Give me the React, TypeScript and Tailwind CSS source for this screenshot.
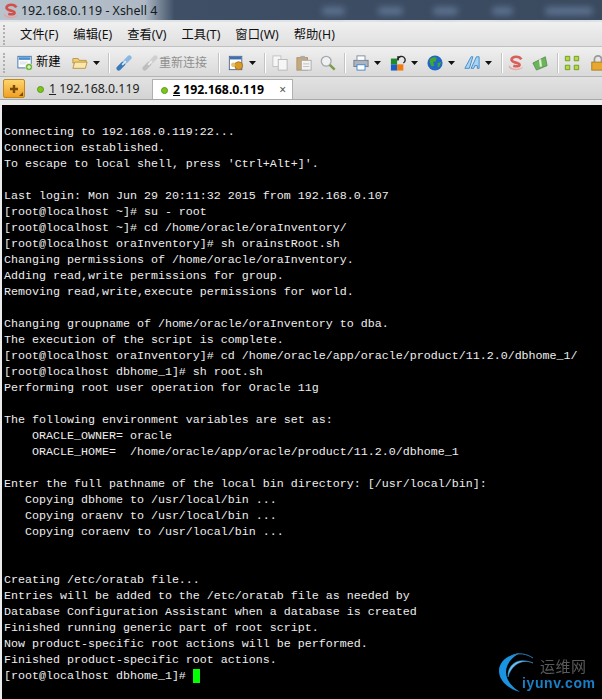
import type { ReactNode } from "react";

const UI_FONT = "font-['Noto_Sans','Noto_Sans_CJK_SC',sans-serif]";

const LINES = [
  "",
  "Connecting to 192.168.0.119:22...",
  "Connection established.",
  "To escape to local shell, press 'Ctrl+Alt+]'.",
  "",
  "Last login: Mon Jun 29 20:11:32 2015 from 192.168.0.107",
  "[root@localhost ~]# su - root",
  "[root@localhost ~]# cd /home/oracle/oraInventory/",
  "[root@localhost oraInventory]# sh orainstRoot.sh",
  "Changing permissions of /home/oracle/oraInventory.",
  "Adding read,write permissions for group.",
  "Removing read,write,execute permissions for world.",
  "",
  "Changing groupname of /home/oracle/oraInventory to dba.",
  "The execution of the script is complete.",
  "[root@localhost oraInventory]# cd /home/oracle/app/oracle/product/11.2.0/dbhome_1/",
  "[root@localhost dbhome_1]# sh root.sh",
  "Performing root user operation for Oracle 11g",
  "",
  "The following environment variables are set as:",
  "    ORACLE_OWNER= oracle",
  "    ORACLE_HOME=  /home/oracle/app/oracle/product/11.2.0/dbhome_1",
  "",
  "Enter the full pathname of the local bin directory: [/usr/local/bin]:",
  "   Copying dbhome to /usr/local/bin ...",
  "   Copying oraenv to /usr/local/bin ...",
  "   Copying coraenv to /usr/local/bin ...",
  "",
  "",
  "Creating /etc/oratab file...",
  "Entries will be added to the /etc/oratab file as needed by",
  "Database Configuration Assistant when a database is created",
  "Finished running generic part of root script.",
  "Now product-specific root actions will be performed.",
  "Finished product-specific root actions.",
];

const MENUS = ["文件(F)", "编辑(E)", "查看(V)", "工具(T)", "窗口(W)", "帮助(H)"];

const Sep = ({ className = "" }: { className?: string }) => (
  <div className={`h-[20px] w-[2px] shrink-0 border-r border-white bg-[#c4c4c4] ${className}`} />
);

const Caret = () => (
  <svg width="7" height="4" className="ml-[5px] shrink-0" viewBox="0 0 7 4">
    <path d="M0 0h7L3.5 4z" fill="#111" />
  </svg>
);

const Icon = ({ children, className = "" }: { children: ReactNode; className?: string }) => (
  <svg width="16" height="16" viewBox="0 0 18 18" className={`shrink-0 ${className}`}>
    {children}
  </svg>
);

const Grip = () => (
  <div className="ml-[3px] h-[20px] w-0 shrink-0 border-l-2 border-dotted border-[#b0b0b0]" />
);

const Swirl = ({ main, pale }: { main: string; pale: string }) => (
  <>
    <path d="M15 5C13 1 5 1 4 5c-1 4 9 3 9 6 0 2-4 2-7 1" fill="none" stroke={main} strokeWidth="3" />
    <path d="M1 11c2 5 12 6 16 2l-1 2c-4 3-12 3-15-1z" fill={pale} />
  </>
);

const Toolbar = () => (
  <div className="flex h-[30px] items-center overflow-hidden border-b border-[#b4b4b4] bg-gradient-to-b from-[#f0f0f0] to-[#d9d9d9] pt-[2px]">
    <Grip />
    <Icon className="ml-[12px]">
      <rect x="1" y="1.5" width="15" height="13" fill="#fff" stroke="#3a6ea5" />
      <rect x="2" y="2.5" width="13" height="3" fill="#4a90d0" />
      <path d="M3 8h9M3 10h7" stroke="#cfd8e0" />
      <circle cx="13.5" cy="13.5" r="4" fill="#62b02c" stroke="#fff" strokeWidth=".6" />
      <path d="M11.2 13.5h4.6M13.5 11.2v4.6" stroke="#fff" strokeWidth="1.2" />
    </Icon>
    <span className="ml-[3px] w-[24px] shrink-0 whitespace-nowrap text-[12.3px] text-black">新建</span>
    <Icon className="ml-[12px]">
      <path d="M1 4h6l1 2h8v3H1z" fill="#f3cf78" stroke="#b8923c" />
      <path d="M1 15l2-7h14l-2 7z" fill="#fbe6ac" stroke="#b8923c" />
    </Icon>
    <Caret />
    <Sep className="ml-[8px]" />
    <Icon className="ml-[6px]">
      <path d="M3 15l5-5" stroke="#3a78b8" strokeWidth="5" strokeLinecap="round" />
      <path d="M11 7l4-4" stroke="#8ab8e0" strokeWidth="5" strokeLinecap="round" />
      <path d="M7 11l4-4" stroke="#e4eef8" strokeWidth="2" />
    </Icon>
    <Icon className="ml-[10px]">
      <path d="M3 15l5-5" stroke="#bdbdbd" strokeWidth="5" strokeLinecap="round" />
      <path d="M11 7l4-4" stroke="#cfcfcf" strokeWidth="5" strokeLinecap="round" />
      <path d="M7 11l4-4" stroke="#eee" strokeWidth="2" />
    </Icon>
    <span className="ml-[1px] w-[48px] shrink-0 whitespace-nowrap text-[12px] text-[#8f8f8f]">重新连接</span>
    <Sep className="ml-[11px]" />
    <Icon className="ml-[8px]">
      <rect x="1.5" y="1.5" width="14" height="15" fill="#fff" stroke="#46628c" />
      <rect x="2" y="2" width="13" height="3" fill="#3f6fb0" />
      <circle cx="12" cy="12" r="4.5" fill="#d99a28" stroke="#8a5c10" strokeWidth=".7" />
      <circle cx="6" cy="11" r="2.5" fill="#e8c060" />
    </Icon>
    <Caret />
    <Sep className="ml-[8px]" />
    <Icon className="ml-[6px]">
      <rect x="1" y="1" width="9" height="12" fill="#f6f6f6" stroke="#c0c0c0" />
      <rect x="7" y="5" width="10" height="12" fill="#f6f6f6" stroke="#b4b4b4" />
    </Icon>
    <Icon className="ml-[8px]">
      <rect x="1" y="3" width="12" height="14" fill="#c9a878" stroke="#a89070" />
      <rect x="5" y="1" width="5" height="3" fill="#aaa" />
      <rect x="6" y="6" width="11" height="11" fill="#f4f4f4" stroke="#aaa" />
      <path d="M8 10h7M8 13h7" stroke="#bbb" />
    </Icon>
    <Icon className="ml-[8px]">
      <circle cx="7" cy="7" r="5.5" fill="#eef2f4" stroke="#a8a8a8" strokeWidth="1.5" />
      <path d="M11 11l5.5 5.5" stroke="#7d9a4e" strokeWidth="2.8" />
    </Icon>
    <Sep className="ml-[8px]" />
    <Icon className="ml-[7px]">
      <rect x="1" y="6" width="16" height="7" fill="#a9b4bf" stroke="#6f7c88" />
      <rect x="4.5" y="1" width="9" height="5" fill="#fff" stroke="#7a8a9a" />
      <rect x="4.5" y="11" width="9" height="6" fill="#fff" stroke="#3c82c4" />
    </Icon>
    <Caret />
    <Icon className="ml-[9px]">
      <rect x="1" y="4" width="7" height="6.5" fill="#1f8a2c" />
      <rect x="1" y="10.5" width="7" height="7" fill="#1c5fc4" />
      <rect x="8" y="10.5" width="7" height="7" fill="#f07c10" />
      <path d="M9 6a4 4 0 1 1 6 3" fill="none" stroke="#222" strokeWidth="1.5" />
      <path d="M9 1v5" stroke="#222" strokeWidth="1.5" />
    </Icon>
    <Caret />
    <Icon className="ml-[9px]">
      <circle cx="9" cy="9" r="8.5" fill="#2266c8" />
      <path d="M3 5c3-3 6-3 8-2l-1 4-3 1 1 4-3 1-2-5zM12 9l4-1-2 5-2 1z" fill="#42a82e" />
    </Icon>
    <Caret />
    <Icon className="ml-[9px]">
      <path d="M1 15L8 2h2L6 15zM8 15l6-13h3v13h-2v-3h-3l-1 3z" fill="#a8d4f4" stroke="#3c86c8" strokeWidth="1" />
    </Icon>
    <Caret />
    <Sep className="ml-[9px]" />
    <Icon className="ml-[5px]">
      <Swirl main="#d9605a" pale="#e8a8a8" />
    </Icon>
    <Icon className="ml-[8px]">
      <path d="M1 9l14-7 2 10-12 5z" fill="#6cb45a" stroke="#3c7c3a" strokeWidth=".7" />
      <path d="M9 5l1 8" stroke="#dff0d0" strokeWidth="2.5" />
    </Icon>
    <Sep className="ml-[9px]" />
    <Icon className="ml-[5px]">
      <path d="M1.5 1.5h5v5h-5zM11.5 1.5h5v5h-5zM1.5 11.5h5v5h-5zM11.5 11.5h5v5h-5z" fill="#b4d848" stroke="#6a9a18" />
    </Icon>
    <Icon className="ml-[10px]">
      <path d="M5 8V5a4 4 0 0 1 8 0v3" fill="none" stroke="#999" strokeWidth="2" />
      <rect x="2" y="8" width="14" height="9" fill="#e8a830" stroke="#a87818" />
    </Icon>
  </div>
);

const Dot = () => (
  <span className="h-[7px] w-[7px] shrink-0 rounded-full border border-[#5b9a12] bg-[#7cc520]" />
);

const Watermark = () => (
  <div className="absolute left-[497px] top-[650px] h-[49px] w-[105px] blur-[0.4px]">
    <svg width="50" height="44" viewBox="0 0 50 44" className="absolute left-0 top-0">
      <path d="M23 3C10 5 2 12 2 21c0 10 10 18 21 21C15 37 9 30 9 22 9 14 15 7 23 3z" fill="#1a94e0" />
      <path d="M11 27C10 16 20 6 36 13 24 8 14 16 11 27z" fill="#6cc0f0" stroke="#3a9ad8" strokeWidth=".5" />
      <path d="M14 6c8-4 16-2 22 2" fill="none" stroke="#2a80b8" />
    </svg>
    <span className={`absolute left-[43px] top-[6px] text-[15px] leading-[20px] tracking-[0.5px] text-[#5a5a5a] ${UI_FONT}`}>运维网</span>
    <span className="absolute left-[25px] top-[23px] font-['Liberation_Sans',sans-serif] text-[14px] font-bold leading-[20px] tracking-[0.6px] text-[#1a7fc4]">iyunv.com</span>
  </div>
);

export default function App() {
  return (
    <div className={`relative flex h-[699px] w-[602px] flex-col overflow-hidden bg-[#e8e8e8] ${UI_FONT}`}>
      {/* title bar */}
      <div className="flex h-[20px] items-center bg-[linear-gradient(90deg,#b9c3cd_0,#aeb9c5_24%,#3e4f66_29%,#3a4a5f_100%)] pl-[3px] pr-[9px] pt-[2px]">
        <svg width="16" height="16" viewBox="0 0 18 18" className="shrink-0">
          <Swirl main="#d2504a" pale="#e8a0a0" />
        </svg>
        <span className="ml-[2px] whitespace-nowrap text-[12.45px] leading-none text-[#141a20]">192.168.0.119 - Xshell 4</span>
        <div className="ml-auto h-[8px] w-[23px] rounded bg-[#5d7290] blur-[3px]" />
        <div className="ml-[33px] h-[8px] w-[25px] rounded bg-[#5d7290] blur-[3px]" />
        <div className="ml-[30px] h-[8px] w-[25px] rounded bg-[#5d7290] blur-[3px]" />
        <div className="ml-[34px] h-[8px] w-[21px] rounded bg-[#5d7290] blur-[3px]" />
        <div className="ml-[32px] h-[8px] w-[48px] rounded bg-[#5d7290] blur-[3px]" />
      </div>
      <div className="h-[2px] bg-[#dfe3e6]" />

      {/* menu bar */}
      <div className="flex h-[25px] items-center border-b border-[#c0c0c0] bg-gradient-to-b from-[#f0f0f0] to-[#e0e0e0] pt-[2px] text-[12.3px] text-[#111]">
        <Grip />
        <div className="ml-[15px] flex gap-[15px]">
          {MENUS.map((m) => (
            <span key={m}>{m}</span>
          ))}
        </div>
      </div>

      <Toolbar />

      {/* tabs */}
      <div className="flex h-[23px] items-end border-b border-[#a8a8a8] bg-gradient-to-b from-[#e2e2e2] to-[#d4d4d4] pl-[3px]">
        <div className="relative mb-[1px] flex h-[19px] w-[22px] items-center justify-center rounded-[2px] border border-[#c08a20] bg-gradient-to-b from-[#fdd468] to-[#f0a020]">
          <svg width="10" height="10" viewBox="0 0 10 10">
            <path d="M5 1v8M1 5h8" stroke="#7a4a00" strokeWidth="2.4" />
          </svg>
          <svg width="4" height="4" viewBox="0 0 4 4" className="absolute bottom-[1px] right-[1px]">
            <path d="M4 0v4H0z" fill="#7a4a00" />
          </svg>
        </div>
        <div className="ml-[12px] flex h-[20px] w-[116px] items-center gap-[5px] pt-[1px] text-[12.3px] text-[#222]">
          <Dot />
          <span>
            <u>1</u> 192.168.0.119
          </span>
        </div>
        <div className="ml-[-1px] flex h-[20px] w-[141px] items-center gap-[5px] border border-b-0 border-[#b0b0b0] bg-white pl-[8px] pt-[1px] text-[12.3px] font-bold text-black">
          <Dot />
          <span>
            <u>2</u> 192.168.0.119
          </span>
          <span className="ml-auto mr-[6px] text-[12px] font-normal leading-none text-[#555]">×</span>
        </div>
      </div>

      {/* terminal */}
      <div className="flex-1 bg-[#ececec] pt-[5px] pl-[2px]">
        <div className="h-full bg-black pl-[2px] pt-[3px] font-['Liberation_Mono',monospace] text-[11.67px] leading-[16px] whitespace-pre text-[#eeeeee]">
          {LINES.map((l, i) => (
            <div key={i} className="h-[16px]">
              {l}
            </div>
          ))}
          <div className="flex h-[16px] items-center">
            <span>[root@localhost dbhome_1]# </span>
            <span className="h-[14px] w-[7px] bg-[#00ff00]" />
          </div>
        </div>
      </div>

      <Watermark />
    </div>
  );
}
